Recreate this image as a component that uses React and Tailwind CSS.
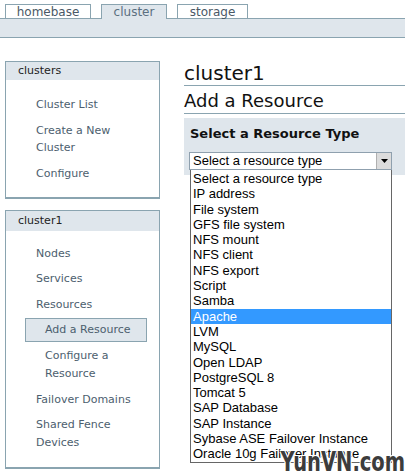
const resourceTypes = [
  "Select a resource type",
  "IP address",
  "File system",
  "GFS file system",
  "NFS mount",
  "NFS client",
  "NFS export",
  "Script",
  "Samba",
  "Apache",
  "LVM",
  "MySQL",
  "Open LDAP",
  "PostgreSQL 8",
  "Tomcat 5",
  "SAP Database",
  "SAP Instance",
  "Sybase ASE Failover Instance",
  "Oracle 10g Failover Instance",
];

const Tab = ({ label, active, w }) => (
  <div
    className={
      "border border-b-0 border-[#8aa4b0] flex items-center justify-center text-[12px] leading-none " +
      (active ? "bg-[#dfe6ec] text-[#5b6f80] h-[15px] -mb-px" : "bg-white text-[#4a5866] h-[14px]") +
      " " + w
    }
  >
    {label}
  </div>
);

const Panel = ({ title, children, headH, pt, lh }) => (
  <div className="w-[155px] border border-b-2 border-[#8aa4b0] bg-white">
    <div className={"bg-[#dfe6ec] pl-[12px] flex items-center text-[11px] text-[#222] " + headH}>{title}</div>
    <div className={"flex flex-col text-[11px] text-[#4c5e6e] pb-[15px] " + pt + " " + lh}>{children}</div>
  </div>
);

export default function App() {
  return (
    <div className="w-[405px] h-[473px] overflow-hidden bg-white relative" style={{ fontFamily: '"DejaVu Sans", Verdana, sans-serif' }}>
      {/* tabs */}
      <div className="flex items-end gap-[10px] pl-[5px] pt-[4px]">
        <Tab label="homebase" w="w-[86px]" />
        <Tab label="cluster" active w="w-[66px]" />
        <Tab label="storage" w="w-[71px]" />
      </div>
      <div className="h-[20px] bg-[#dfe6ec] border-y border-[#8aa4b0]" />

      <div className="flex mt-[23px]">
        {/* sidebar */}
        <div className="ml-[5px] flex flex-col gap-[11px]">
          <Panel title="clusters" headH="h-[18px]" pt="pt-[16px]" lh="leading-[17px]">
            <div className="pl-[30px]">Cluster List</div>
            <div className="pl-[30px] mt-[9px]">Create a New<br />Cluster</div>
            <div className="pl-[30px] mt-[9px]">Configure</div>
          </Panel>
          <Panel title="cluster1" headH="h-[20px]" pt="pt-[14px]" lh="leading-[18px]">
            <div className="pl-[30px]">Nodes</div>
            <div className="pl-[30px] mt-[7px]">Services</div>
            <div className="pl-[30px] mt-[8px]">Resources</div>
            <div className="ml-[19px] mr-[12px] mt-[4px] h-[24px] border border-[#8aa4b0] bg-[#dfe6ec] pl-[19px] flex items-center">
              Add a Resource
            </div>
            <div className="pl-[39px] mt-[5px]">Configure a<br />Resource</div>
            <div className="pl-[30px] mt-[8px]">Failover Domains</div>
            <div className="pl-[30px] mt-[7px]">Shared Fence<br />Devices</div>
          </Panel>
        </div>

        {/* content */}
        <div className="ml-[24px] flex-1 relative">
          <div className="text-[20px] leading-[24px] text-[#111] border-b border-[#8aa4b0]">cluster1</div>
          <div className="text-[18px] leading-[24px] text-[#111] border-b border-[#8aa4b0] mt-[3px]">Add a Resource</div>
          <div className="bg-[#dfe6ec] mt-[4px] pt-[8px] pb-[5px] pl-[5px]">
            <div className="text-[13px] font-bold text-[#111] pl-[1px] leading-[16px]">Select a Resource Type</div>
            <div className="relative mt-[10px] w-[203px]">
              <div
                className="h-[18px] border border-[#8fa0ae] bg-white flex items-center justify-between text-[13px] text-black pl-[3px]"
                style={{ fontFamily: '"Liberation Sans", Arial, sans-serif' }}
              >
                <span>Select a resource type</span>
                <span className="w-[15px] h-[16px] bg-[#dcdcdc] border-l border-[#b0b0b0] flex items-center justify-center">
                  <svg width="7" height="4" viewBox="0 0 7 4"><path d="M0 0h7L3.5 4z" fill="#000" /></svg>
                </span>
              </div>
              <div
                className="absolute left-[1px] top-[18px] w-[202px] border border-t-0 border-[#666] bg-white text-[13px] text-black z-10 pt-px"
                style={{ fontFamily: '"Liberation Sans", Arial, sans-serif' }}
              >
                {resourceTypes.map((t) => (
                  <div
                    key={t}
                    className={"h-[15.3px] leading-[15.3px] pl-[2px] whitespace-nowrap " + (t === "Apache" ? "bg-[#3399ff] text-white" : "")}
                  >
                    {t}
                  </div>
                ))}
              </div>
            </div>
          </div>
        </div>
      </div>

      {/* watermark */}
      <div
        className="absolute right-[0px] bottom-[-2px] text-[26px] leading-none font-black text-[#3c3c3c] z-20 scale-x-75 origin-right whitespace-nowrap"
        style={{ fontFamily: '"DejaVu Sans", sans-serif', textShadow: "1px 1px 0 #fff, -1px -1px 0 #fff, 1px -1px 0 #fff, -1px 1px 0 #fff" }}
      >
        YunVN.com
      </div>
    </div>
  );
}
